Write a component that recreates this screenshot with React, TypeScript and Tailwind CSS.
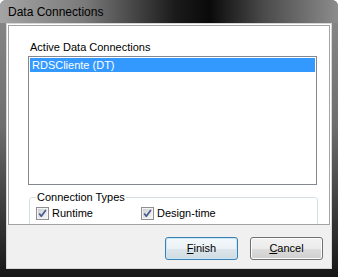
import React from "react";

function Check() {
  return (
    <svg width="13" height="13" viewBox="0 0 13 13" className="shrink-0">
      <defs>
        <linearGradient id="cbg" x1="0" y1="0" x2="1" y2="1">
          <stop offset="0" stopColor="#cbcfd5" />
          <stop offset="1" stopColor="#f6f6f6" />
        </linearGradient>
      </defs>
      <rect x="0.5" y="0.5" width="12" height="12" fill="#f4f4f4" stroke="#8f8f8f" />
      <rect x="2" y="2" width="9" height="9" fill="url(#cbg)" />
      <path d="M3.2 6.4 L5.3 9.2 L9.9 2.9" fill="none" stroke="#4a5a8c" strokeWidth="1.7" strokeLinejoin="round" />
    </svg>
  );
}

export default function App() {
  return (
    <div className="w-[338px] h-[277px] flex flex-col overflow-hidden rounded-t-[6px] bg-[linear-gradient(to_bottom,#8a8a8a_0%,#6e6e6e_45%,#151515_100%)] font-['Liberation_Sans',Arial,sans-serif] text-black">
      <div className="h-[23px] shrink-0 flex items-center pl-[8px] text-[12px] bg-[linear-gradient(90deg,#a4a4a4_0%,#7a7a7a_25%,#1a1a1a_52%,#0a0a0a_62%,#4a4a4a_78%,#8c8c8c_100%)]">
        Data Connections
      </div>
      <div className="flex-1 flex flex-col px-[6px] pb-[8px]">
        <div className="flex-1 flex flex-col border border-[#d6d6d6] bg-[#f0f0f0]">
          <div className="bg-white p-[1px] pb-0">
            <div className="border border-[#a3a3a3] bg-white h-[200px] overflow-hidden text-[11px]">
              <div className="h-[198px] overflow-hidden pt-[14px]">
                <div className="pl-[21px] leading-[14px]">Active Data Connections</div>
                <div className="ml-[19px] mt-[2px] w-[289px] h-[129px] border border-[#828790] p-[1px]">
                  <div className="h-[14px] bg-[#3399ff] text-white leading-[14px] pl-[2px]">RDSCliente (DT)</div>
                </div>
                <fieldset className="ml-[20px] mt-[5px] w-[289px] h-[50px] border border-[#d5dfe5] rounded-[3px] px-[6px]">
                  <legend className="px-[1px] leading-[14px]">Connection Types</legend>
                  <div className="flex items-center mt-[3px] h-[13px]">
                    <div className="w-[105px] flex items-center gap-[3px]">
                      <Check />
                      <span className="leading-[13px]">Runtime</span>
                    </div>
                    <div className="flex items-center gap-[3px]">
                      <Check />
                      <span className="leading-[13px]">Design-time</span>
                    </div>
                  </div>
                </fieldset>
              </div>
            </div>
          </div>
          <div className="flex-1 flex justify-end items-start pt-[12px] pr-[8px] gap-[12px] text-[11px]">
            <button className="w-[73px] h-[23px] rounded-[3px] border border-[#3c7fb1] bg-[linear-gradient(to_bottom,#f2f8fb_0%,#ebf2f6_50%,#dde6ec_50%,#cfdbe2_100%)] shadow-[inset_0_0_0_1px_#c8e8f8] flex items-center justify-center">
              <span><span className="underline">F</span>inish</span>
            </button>
            <button className="w-[73px] h-[23px] rounded-[3px] border border-[#707070] bg-[linear-gradient(to_bottom,#f2f2f2_0%,#ebebeb_50%,#dddddd_50%,#cfcfcf_100%)] shadow-[inset_0_0_0_1px_#fcfcfc] flex items-center justify-center">
              <span><span className="underline">C</span>ancel</span>
            </button>
          </div>
        </div>
      </div>
    </div>
  );
}
